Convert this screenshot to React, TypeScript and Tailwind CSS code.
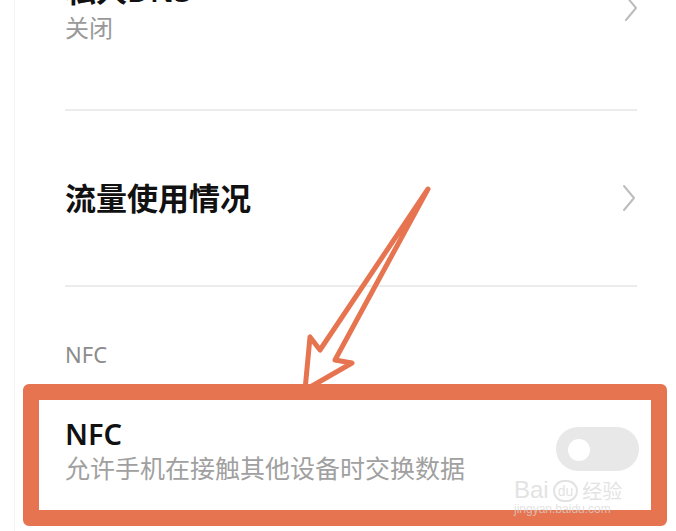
import React from 'react'

const Chevron = () => (
  <svg width="16" height="28" viewBox="0 0 16 28" className="shrink-0">
    <path d="M3 2 L13 14 L3 26" fill="none" stroke="#bdbdbd" strokeWidth="2" strokeLinecap="round" strokeLinejoin="round" />
  </svg>
)

export default function App() {
  return (
    <div className="relative w-[676px] h-[531px] overflow-hidden bg-white font-['Noto_Sans','Noto_Sans_CJK_SC',sans-serif]">
      <div className="absolute left-[14px] top-0 bottom-0 w-px bg-[#f3f3f3]" />

      {/* 私人DNS */}
      <div className="flex items-center justify-between pl-[65px] pr-[37px] -mt-[28px]">
        <div className="flex flex-col gap-[4px]">
          <div className="text-[31px] leading-[36px] font-semibold text-[#111]">私人DNS</div>
          <div className="text-[24px] leading-[32px] text-[#999]">关闭</div>
        </div>
        <Chevron />
      </div>
      <div className="ml-[65px] mr-[39px] mt-[65px] h-[2px] bg-[#ececec]" />

      {/* 流量使用情况 */}
      <div className="flex items-center justify-between pl-[65px] pr-[39px] h-[174px]">
        <div className="text-[31px] leading-[36px] font-semibold text-[#111]">流量使用情况</div>
        <Chevron />
      </div>
      <div className="ml-[65px] mr-[39px] h-[2px] bg-[#ececec]" />

      <div className="pl-[65px] mt-[55px] text-[22px] leading-[24px] text-[#8c8c8c]">NFC</div>

      {/* highlighted NFC row */}
      <div className="ml-[23px] mr-[9px] mt-[18px] h-[142px] rounded-[6px] border-[16px] border-[#e77450] bg-white flex justify-between pl-[26px] pr-[12px]">
        <div className="flex flex-col pt-[18px] gap-[2px]">
          <div className="text-[29px] leading-[32px] font-semibold text-[#111]">NFC</div>
          <div className="text-[25px] leading-[32px] text-[#a0a0a0]">允许手机在接触其他设备时交换数据</div>
        </div>
        <div className="relative mt-[27px] w-[83px] h-[44px] rounded-full bg-[#e8e8e8]">
          <div className="absolute left-[12px] top-[12px] w-[22px] h-[22px] rounded-full bg-white" />
        </div>
      </div>

      {/* watermark */}
      <div className="absolute left-[514px] top-[478px] flex flex-col items-start opacity-70">
        <div className="flex items-end gap-[4px] text-[#d8d8d8]">
          <span className="text-[24px] leading-[24px] font-['Liberation_Sans',sans-serif]">Bai</span>
          <span className="text-[14px] leading-[18px] px-[3px] rounded-full border-2 border-[#d8d8d8] font-['Liberation_Sans',sans-serif]">du</span>
          <span className="text-[20px] leading-[22px] font-['Noto_Sans_CJK_SC',sans-serif]">经验</span>
        </div>
        <div className="text-[12px] leading-[14px] text-[#d8d8d8] font-['Liberation_Sans',sans-serif]">jingyan.baidu.com</div>
      </div>

      {/* arrow */}
      <svg className="absolute left-0 top-0 pointer-events-none" width="676" height="531" viewBox="0 0 676 531">
        <polygon
          points="428,189 320,350 310,337 305,390 352,363 335,360"
          fill="none"
          stroke="#e77450"
          strokeWidth="5"
          strokeLinejoin="round"
          strokeLinecap="round"
        />
      </svg>
    </div>
  )
}
